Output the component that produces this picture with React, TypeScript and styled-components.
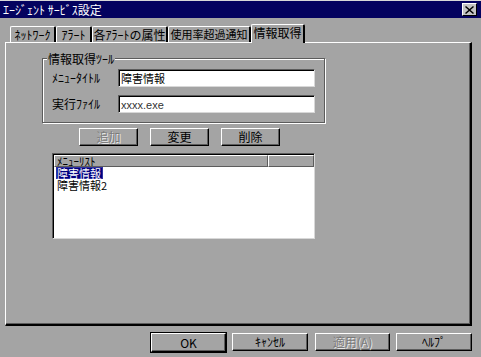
import React from "react";
import styled, { createGlobalStyle } from "styled-components";

const GlobalStyle = createGlobalStyle`
  * { box-sizing: border-box; }
  html, body { margin: 0; padding: 0; background: #a4a4a4; }
  body { font-family: "Noto Sans CJK JP", "Liberation Sans", sans-serif; font-size: 12px; color: #000; }
`;

const NAVY = "#04025f";
const GRAY = "#a4a4a4";
const DARK = "#5c5c5c";

const Window = styled.div`
  width: 481px;
  height: 357px;
  background: ${GRAY};
  border-top: 1px solid #d8d8d8;
  display: flex;
  flex-direction: column;
  overflow: hidden;
`;

const TitleBar = styled.div`
  height: 17px;
  background: ${NAVY};
  display: flex;
  align-items: center;
  justify-content: space-between;
  padding: 0 4px 0 3px;
`;

const TitleText = styled.span`
  color: #fff;
  font-size: 12px;
  line-height: 1;
`;

const CloseButton = styled.div`
  width: 15px;
  height: 13px;
  background: #c4c4c4;
  border-top: 1px solid #fff;
  border-left: 1px solid #fff;
  border-right: 1px solid #000;
  border-bottom: 1px solid #000;
  display: flex;
  align-items: center;
  justify-content: center;
`;

const Body = styled.div`
  flex: 1;
  display: flex;
  flex-direction: column;
  padding: 6px 9px 0 5px;
`;

const TabStrip = styled.div`
  height: 18px;
  display: flex;
  align-items: flex-end;
  padding-left: 5px;
  position: relative;
  z-index: 1;
`;

const Tab = styled.div<{ $active?: boolean; $w: number; $tight?: boolean }>`
  width: ${(p) => p.$w}px;
  height: ${(p) => (p.$active ? 19 : 16)}px;
  margin-bottom: ${(p) => (p.$active ? -1 : 0)}px;
  padding-bottom: ${(p) => (p.$active ? 2 : 0)}px;
  background: ${GRAY};
  border-top: 1px solid #fff;
  border-left: 1px solid #fff;
  border-right: 2px solid #000;
  border-top-left-radius: 2px;
  border-top-right-radius: 2px;
  display: flex;
  align-items: center;
  justify-content: center;
  font-size: ${(p) => (p.$tight ? 11 : 12)}px;
  line-height: 1;
  white-space: nowrap;
`;

const Panel = styled.div`
  height: 284px;
  border-top: 1px solid #fff;
  border-left: 1px solid #fff;
  border-right: 2px solid #000;
  border-bottom: 2px solid #000;
  box-shadow: inset -1px -1px 0 ${DARK};
  display: flex;
  flex-direction: column;
  align-items: flex-start;
`;

const GroupBox = styled.div`
  position: relative;
  margin: 15px 0 0 36px;
  width: 283px;
  height: 65px;
  border: 1px solid ${DARK};
  box-shadow: inset 1px 1px 0 #fff, 1px 1px 0 #fff;
  padding: 10px 0 0 9px;
  display: flex;
  flex-direction: column;
  gap: 8px;
`;

const Legend = styled.span`
  position: absolute;
  top: -7px;
  left: 4px;
  background: ${GRAY};
  padding: 0 1px;
  font-size: 12px;
  line-height: 13px;
`;

const FieldRow = styled.div`
  display: flex;
  align-items: center;
`;

const FieldLabel = styled.span`
  width: 66px;
  font-size: 12px;
  line-height: 1;
  white-space: nowrap;
`;

const TextInput = styled.div`
  width: 197px;
  height: 18px;
  background: #fff;
  border-top: 1px solid ${DARK};
  border-left: 1px solid ${DARK};
  border-right: 1px solid #d8d8d8;
  border-bottom: 1px solid #d8d8d8;
  box-shadow: inset 1px 1px 0 #000;
  padding: 2px 0 0 2px;
  font-size: 11px;
  line-height: 13px;
`;

const ExeText = styled.span`
  font-family: "Liberation Sans", sans-serif;
  font-size: 11px;
  color: #333;
`;

const ButtonRow = styled.div`
  display: flex;
  gap: 12px;
  margin: 5px 0 0 73px;
`;

const Button = styled.div<{ $w: number; $disabled?: boolean; $default?: boolean }>`
  width: ${(p) => p.$w}px;
  height: ${(p) => (p.$default ? 19 : 18)}px;
  background: ${GRAY};
  border-top: 1px solid #fff;
  border-left: 1px solid #fff;
  border-right: 1px solid #000;
  border-bottom: 1px solid #000;
  box-shadow: inset -1px -1px 0 ${DARK}${(p) => (p.$default ? ", 0 0 0 1px #000" : "")};
  display: flex;
  align-items: center;
  justify-content: center;
  font-size: 12px;
  line-height: 1;
  color: ${(p) => (p.$disabled ? "#7c7c7c" : "#000")};
  text-shadow: ${(p) => (p.$disabled ? "1px 1px 0 #e8e8e8" : "none")};
`;

const ListView = styled.div`
  margin: 7px 0 0 46px;
  width: 263px;
  height: 86px;
  background: #fff;
  border-top: 1px solid ${DARK};
  border-left: 1px solid ${DARK};
  border-right: 1px solid #d8d8d8;
  border-bottom: 1px solid #d8d8d8;
  box-shadow: inset 1px 1px 0 #000;
  padding: 1px 0 0 1px;
  display: flex;
  flex-direction: column;
`;

const Header = styled.div`
  display: flex;
  height: 12px;
`;

const HeaderCell = styled.div<{ $w?: number }>`
  ${(p) => (p.$w ? `width: ${p.$w}px;` : "flex: 1;")}
  background: ${GRAY};
  border-top: 1px solid #fff;
  border-left: 1px solid #fff;
  border-right: 1px solid ${DARK};
  border-bottom: 1px solid ${DARK};
  font-size: 11px;
  line-height: 10px;
  padding-left: 2px;
  white-space: nowrap;
`;

const Items = styled.div`
  display: flex;
  flex-direction: column;
  padding: 0 0 0 2px;
`;

const Item = styled.div<{ $selected?: boolean }>`
  align-self: flex-start;
  height: 12px;
  padding: 0 2px 0 1px;
  font-size: 11px;
  line-height: 12px;
  background: ${(p) => (p.$selected ? "#000080" : "transparent")};
  color: ${(p) => (p.$selected ? "#fff" : "#000")};
  box-shadow: ${(p) => (p.$selected ? "inset 0 0 0 1px #3030a0" : "none")};
`;

const Footer = styled.div`
  display: flex;
  justify-content: flex-end;
  gap: 7px;
  margin-top: 7px;
`;

const FooterGroup = styled.div`
  display: flex;
  gap: 6px;
`;

export default function App() {
  return (
    <>
      <GlobalStyle />
      <Window>
        <TitleBar>
          <TitleText>ｴｰｼﾞｪﾝﾄ ｻｰﾋﾞｽ設定</TitleText>
          <CloseButton>
            <svg width="9" height="8" viewBox="0 0 9 8">
              <path d="M1 0 L4.5 3 L8 0 L9 1 L5.5 4 L9 7 L8 8 L4.5 5 L1 8 L0 7 L3.5 4 L0 1 Z" fill="#000" />
            </svg>
          </CloseButton>
        </TitleBar>
        <Body>
          <TabStrip>
            <Tab $w={46}>ﾈｯﾄﾜｰｸ</Tab>
            <Tab $w={36}>ｱﾗｰﾄ</Tab>
            <Tab $w={76}>各ｱﾗｰﾄの属性</Tab>
            <Tab $w={83} $tight>使用率超過通知</Tab>
            <Tab $w={54} $active>情報取得</Tab>
          </TabStrip>
          <Panel>
            <GroupBox>
              <Legend>情報取得ﾂｰﾙ</Legend>
              <FieldRow>
                <FieldLabel>ﾒﾆｭｰﾀｲﾄﾙ</FieldLabel>
                <TextInput>障害情報</TextInput>
              </FieldRow>
              <FieldRow>
                <FieldLabel>実行ﾌｧｲﾙ</FieldLabel>
                <TextInput>
                  <ExeText>xxxx.exe</ExeText>
                </TextInput>
              </FieldRow>
            </GroupBox>
            <ButtonRow>
              <Button $w={59} $disabled>追加</Button>
              <Button $w={59}>変更</Button>
              <Button $w={59}>削除</Button>
            </ButtonRow>
            <ListView>
              <Header>
                <HeaderCell $w={214}>ﾒﾆｭｰﾘｽﾄ</HeaderCell>
                <HeaderCell />
              </Header>
              <Items>
                <Item $selected>障害情報</Item>
                <Item>障害情報2</Item>
              </Items>
            </ListView>
          </Panel>
          <Footer>
            <FooterGroup>
              <Button $w={75} $default>OK</Button>
              <Button $w={76}>ｷｬﾝｾﾙ</Button>
            </FooterGroup>
            <FooterGroup>
              <Button $w={75} $disabled>適用(A)</Button>
              <Button $w={76}>ﾍﾙﾌﾟ</Button>
            </FooterGroup>
          </Footer>
        </Body>
      </Window>
    </>
  );
}
